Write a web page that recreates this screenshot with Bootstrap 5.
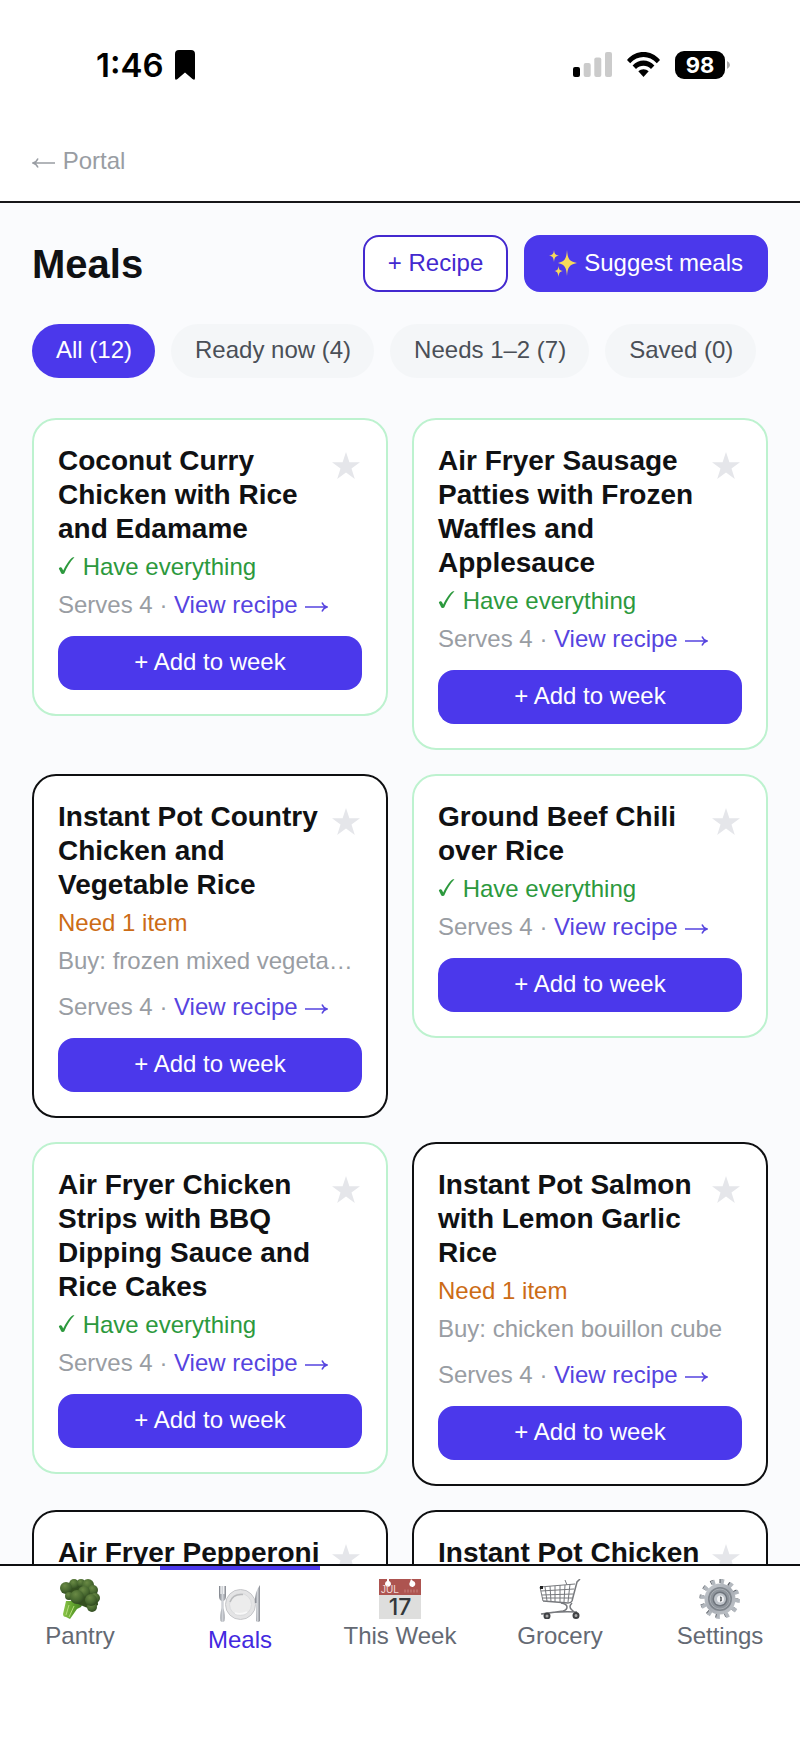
<!DOCTYPE html>
<html lang="en">
<head>
  <meta charset="utf-8" />
  <meta name="viewport" content="width=device-width, initial-scale=1" />
  <title>Meals</title>
  <link href="https://cdn.jsdelivr.net/npm/bootstrap@5.3.3/dist/css/bootstrap.min.css" rel="stylesheet" />
  <script src="https://cdn.jsdelivr.net/npm/bootstrap@5.3.3/dist/js/bootstrap.bundle.min.js"></script>
  <style>
    :root {
      --indigo: #4b38eb;
      --ink: #101113;
      --muted: #999da3;
    }
    body {
      font-family: "Liberation Sans", Arial, sans-serif;
      font-size: 24px;
      line-height: 32px;
      color: var(--ink);
      background: #fff;
    }
    a {
      text-decoration: none;
    }
    .status-bar {
      padding: 45px 70px 0 96px;
      height: 85px;
      font-family: Inter, sans-serif;
      color: #000;
    }
    .time-group {
      gap: 11px;
    }
    .clock {
      font-size: 33px;
      font-weight: 600;
    }
    .status-icons {
      gap: 15px;
    }
    .top-link {
      padding: 61px 32px 24px;
      border-bottom: 2px solid #17171a;
    }
    .top-link a {
      color: var(--muted);
    }
    main {
      background: #fafbfd;
      padding: 32px 32px 0;
      min-height: 0;
      scrollbar-width: none;
    }
    h1 {
      font-size: 40px;
      font-weight: 700;
    }
    .btn {
      font-size: 24px;
      line-height: 32px;
    }
    .btn-top {
      gap: 7px;
      padding: 10px 23px 11px;
      border: 2px solid #4b38eb;
      border-radius: 16px;
    }
    .btn-recipe {
      color: #4329cf;
      border-color: #4329cf;
      background: #fff;
    }
    .btn-indigo {
      color: #fff;
      background: var(--indigo);
    }
    .chips {
      margin: 32px 0 40px;
    }
    .chip {
      padding: 10px 23px 12px 24px;
      border: 0;
      color: #4a4f57;
      background: #f4f6f8;
    }
    .chip.active {
      color: #fff;
      background: var(--indigo);
    }
    .meal {
      padding: 24px;
      background: #fff;
      border: 2px solid #0e0f11;
      border-radius: 24px;
    }
    .meal-ready {
      border-color: #bdf2cf;
    }
    .meal h2 {
      font-size: 28px;
      line-height: 34px;
      font-weight: 700;
    }
    .fav {
      margin-top: 8px;
      color: #e5e6ea;
      line-height: 0;
    }
    .status-line {
      margin-top: 5px;
    }
    .have {
      color: #2c993d;
    }
    .need {
      color: #cc6c16;
    }
    .buy {
      margin-top: 6px;
      color: var(--muted);
    }
    .serves {
      margin-top: 6px;
      color: var(--muted);
    }
    .buy + .serves {
      margin-top: 14px;
    }
    .serves a {
      color: #5644df;
    }
    .btn-add {
      margin-top: 15px;
      padding: 10px 24px 12px;
      border: 0;
      border-radius: 16px;
    }
    .tab-bar {
      height: 175px;
      background: #fff;
      border-top: 2px solid #0e0f11;
    }
    .tab-bar a {
      flex: 1 1 0;
      padding-top: 13px;
      line-height: 28px;
      text-align: center;
      color: #646973;
    }
    .tab-bar a.active {
      color: #4329e0;
      border-top: 4px solid var(--indigo);
    }
    .tab-bar svg {
      display: block;
      margin: 0 auto 3px;
    }
  </style>
</head>
<body class="d-flex flex-column vh-100 overflow-hidden">

  <!-- Shared icons -->
  <svg class="d-none" xmlns="http://www.w3.org/2000/svg">
    <symbol id="star" viewBox="0 0 28 28">
      <path fill="currentColor" d="M14 0 L17.4 10.2 H28 L19.5 16.6 L22.8 27 L14 20.6 L5.2 27 L8.5 16.6 L0 10.2 H10.6 Z" />
    </symbol>
    <symbol id="check" viewBox="0 0 18 20">
      <path fill="currentColor" d="M0 13 C0 11.4 2.6 10.7 3.4 12.2 L4.8 15 C7.4 9.4 11.4 3.6 14.6 .8 C15.4 .2 16.2 .2 17.3 .2 C12.4 5.2 8.8 11.4 6.2 17.7 C5.5 19 3 19.2 2.5 18 C1.9 16.4 .8 14.8 0 13 Z" />
    </symbol>
    <symbol id="arrow" viewBox="0 0 24 12">
      <path fill="none" stroke="currentColor" stroke-width="1.5" d="M1 6 H22.5 M18 1.500 Q19.500 5 23 6 Q19.500 7 18 10.500" />
    </symbol>
    <symbol id="arrow-back" viewBox="0 0 24 12">
      <path fill="none" stroke="currentColor" stroke-width="1.5" d="M23 6 H1.5 M6 1.500 Q4.500 5 1 6 Q4.500 7 6 10.500" />
    </symbol>
  </svg>

  <!-- Status bar -->
  <div class="status-bar d-flex justify-content-between align-items-center">
    <div class="time-group d-flex align-items-center">
      <span class="clock">1:46</span>
      <svg width="20" height="30" viewBox="0 0 20 30"><path d="M4 0 H16 Q20 0 20 4 V28 Q20 31 17.5 29 L10 22.5 L2.5 29 Q0 31 0 28 V4 Q0 0 4 0 Z" /></svg>
    </div>
    <div class="status-icons d-flex align-items-center">
      <svg width="39" height="25" viewBox="0 0 39 25">
        <rect x="0" y="15" width="7" height="10" rx="2" />
        <g fill="#cbcbcb">
          <rect x="10.7" y="11" width="7" height="14" rx="2" />
          <rect x="21.3" y="5.5" width="7" height="19.5" rx="2" />
          <rect x="32" y="0" width="7" height="25" rx="2" />
        </g>
      </svg>
      <svg width="33" height="25" viewBox="0 0 33 25">
        <path d="M0 8 C9 -2.6 24 -2.6 33 8 L29.8 11.2 C22.4 3 10.6 3 3.2 11.2 Z" />
        <path d="M5.6 13.6 C11.8 6.9 21.2 6.9 27.4 13.6 L24 17 C19.8 12.6 13.2 12.6 9 17 Z" />
        <path d="M11.3 19.3 C14.2 16.6 18.8 16.6 21.7 19.3 L16.5 25 Z" />
      </svg>
      <svg width="55" height="28" viewBox="0 0 55 28">
        <rect width="50" height="28" rx="9" />
        <path fill="#a9a9a9" d="M52 10 Q55 11.5 55 14 Q55 16.5 52 18 Z" />
        <text x="25" y="22" text-anchor="middle" font-family="Inter, sans-serif" font-size="22" font-weight="700" fill="#fff">98</text>
      </svg>
    </div>
  </div>

  <div class="top-link">
    <a href="#"><svg class="align-baseline" width="24" height="12"><use href="#arrow-back" /></svg> Portal</a>
  </div>

  <main class="flex-grow-1 overflow-auto">
    <div class="d-flex align-items-center gap-3">
      <h1 class="mb-0 me-auto">Meals</h1>
      <button type="button" class="btn btn-top btn-recipe">+ Recipe</button>
      <button type="button" class="btn btn-top btn-indigo d-flex align-items-center">
        <svg width="28" height="28" viewBox="0 0 28 28" fill="#f6d95b">
          <path d="M18 1 C18.7 9.5 20 12.5 28 14 C20 15.5 18.7 18.5 18 27 C17.3 18.5 16 15.5 9 14 C16 12.5 17.3 9.5 18 1 Z" />
          <path d="M5 1 C5.5 5 6.2 6 10 6.5 C6.2 7.2 5.5 8.5 5 13 C4.5 8.5 3.8 7.2 0 6.5 C3.8 6 4.5 5 5 1 Z" />
          <path d="M9.5 17 C10 20.5 10.6 21.5 14 22 C10.6 22.6 10 24 9.5 28 C9 24 8.4 22.6 5.5 22 C8.4 21.5 9 20.5 9.5 17 Z" />
        </svg>
        Suggest meals
      </button>
    </div>

    <!-- Filters -->
    <div class="chips d-flex gap-3">
      <button type="button" class="btn rounded-pill chip active">All (12)</button>
      <button type="button" class="btn rounded-pill chip">Ready now (4)</button>
      <button type="button" class="btn rounded-pill chip">Needs 1–2 (7)</button>
      <button type="button" class="btn rounded-pill chip">Saved (0)</button>
    </div>

    <!-- Meal cards -->
    <div class="row row-cols-2 g-4 align-items-start">
      <div class="col">
        <div class="meal meal-ready">
          <div class="d-flex align-items-start gap-2">
            <h2 class="mb-0 flex-grow-1">Coconut Curry Chicken with Rice and Edamame</h2>
            <button type="button" class="btn fav p-0 border-0" aria-label="Save meal"><svg width="32" height="28"><use href="#star" /></svg></button>
          </div>
          <div class="status-line have"><svg class="align-baseline" width="18" height="18"><use href="#check" /></svg> Have everything</div>
          <div class="serves">Serves 4 · <a href="#">View recipe <svg class="align-baseline" width="24" height="12"><use href="#arrow" /></svg></a></div>
          <button type="button" class="btn btn-indigo btn-add w-100 d-block">+ Add to week</button>
        </div>
      </div>

      <div class="col">
        <div class="meal meal-ready">
          <div class="d-flex align-items-start gap-2">
            <h2 class="mb-0 flex-grow-1">Air Fryer Sausage Patties with Frozen Waffles and Applesauce</h2>
            <button type="button" class="btn fav p-0 border-0" aria-label="Save meal"><svg width="32" height="28"><use href="#star" /></svg></button>
          </div>
          <div class="status-line have"><svg class="align-baseline" width="18" height="18"><use href="#check" /></svg> Have everything</div>
          <div class="serves">Serves 4 · <a href="#">View recipe <svg class="align-baseline" width="24" height="12"><use href="#arrow" /></svg></a></div>
          <button type="button" class="btn btn-indigo btn-add w-100 d-block">+ Add to week</button>
        </div>
      </div>

      <div class="col">
        <div class="meal">
          <div class="d-flex align-items-start gap-2">
            <h2 class="mb-0 flex-grow-1">Instant Pot Country Chicken and Vegetable Rice</h2>
            <button type="button" class="btn fav p-0 border-0" aria-label="Save meal"><svg width="32" height="28"><use href="#star" /></svg></button>
          </div>
          <div class="status-line need">Need 1 item</div>
          <div class="buy text-truncate">Buy: frozen mixed vegetables</div>
          <div class="serves">Serves 4 · <a href="#">View recipe <svg class="align-baseline" width="24" height="12"><use href="#arrow" /></svg></a></div>
          <button type="button" class="btn btn-indigo btn-add w-100 d-block">+ Add to week</button>
        </div>
      </div>

      <div class="col">
        <div class="meal meal-ready">
          <div class="d-flex align-items-start gap-2">
            <h2 class="mb-0 flex-grow-1">Ground Beef Chili over Rice</h2>
            <button type="button" class="btn fav p-0 border-0" aria-label="Save meal"><svg width="32" height="28"><use href="#star" /></svg></button>
          </div>
          <div class="status-line have"><svg class="align-baseline" width="18" height="18"><use href="#check" /></svg> Have everything</div>
          <div class="serves">Serves 4 · <a href="#">View recipe <svg class="align-baseline" width="24" height="12"><use href="#arrow" /></svg></a></div>
          <button type="button" class="btn btn-indigo btn-add w-100 d-block">+ Add to week</button>
        </div>
      </div>

      <div class="col">
        <div class="meal meal-ready">
          <div class="d-flex align-items-start gap-2">
            <h2 class="mb-0 flex-grow-1">Air Fryer Chicken Strips with BBQ Dipping Sauce and Rice Cakes</h2>
            <button type="button" class="btn fav p-0 border-0" aria-label="Save meal"><svg width="32" height="28"><use href="#star" /></svg></button>
          </div>
          <div class="status-line have"><svg class="align-baseline" width="18" height="18"><use href="#check" /></svg> Have everything</div>
          <div class="serves">Serves 4 · <a href="#">View recipe <svg class="align-baseline" width="24" height="12"><use href="#arrow" /></svg></a></div>
          <button type="button" class="btn btn-indigo btn-add w-100 d-block">+ Add to week</button>
        </div>
      </div>

      <div class="col">
        <div class="meal">
          <div class="d-flex align-items-start gap-2">
            <h2 class="mb-0 flex-grow-1">Instant Pot Salmon with Lemon Garlic Rice</h2>
            <button type="button" class="btn fav p-0 border-0" aria-label="Save meal"><svg width="32" height="28"><use href="#star" /></svg></button>
          </div>
          <div class="status-line need">Need 1 item</div>
          <div class="buy text-truncate">Buy: chicken bouillon cube</div>
          <div class="serves">Serves 4 · <a href="#">View recipe <svg class="align-baseline" width="24" height="12"><use href="#arrow" /></svg></a></div>
          <button type="button" class="btn btn-indigo btn-add w-100 d-block">+ Add to week</button>
        </div>
      </div>

      <div class="col">
        <div class="meal">
          <div class="d-flex align-items-start gap-2">
            <h2 class="mb-0 flex-grow-1">Air Fryer Pepperoni</h2>
            <button type="button" class="btn fav p-0 border-0" aria-label="Save meal"><svg width="32" height="28"><use href="#star" /></svg></button>
          </div>
        </div>
      </div>

      <div class="col">
        <div class="meal">
          <div class="d-flex align-items-start gap-2">
            <h2 class="mb-0 flex-grow-1">Instant Pot Chicken</h2>
            <button type="button" class="btn fav p-0 border-0" aria-label="Save meal"><svg width="32" height="28"><use href="#star" /></svg></button>
          </div>
        </div>
      </div>
    </div>
  </main>

  <!-- Bottom tabs -->
  <nav class="tab-bar d-flex flex-shrink-0">
    <a href="#">
      <svg width="40" height="40" viewBox="0 0 40 40">
        <defs>
          <radialGradient id="leaf" cx=".4" cy=".3" r=".75"><stop offset="0" stop-color="#6a8a45" /><stop offset=".6" stop-color="#47682f" /><stop offset="1" stop-color="#2d461e" /></radialGradient>
          <linearGradient id="stem"><stop offset="0" stop-color="#8cc54a" /><stop offset=".5" stop-color="#5fa02c" /><stop offset="1" stop-color="#3f7a22" /></linearGradient>
        </defs>
        <path fill="url(#stem)" d="M6 22 L3 35 Q3 38 6 38 L10 40 L17 30 L21 28 L24 22 Z" />
        <path stroke="#b5dc7c" fill="none" d="M9 26 L6 36 M14 27 L9 38" />
        <path fill="#34501f" d="M5 6 L14 2 L30 3 L37 12 L38 26 L30 30 L18 25 L6 14 Z" />
        <g fill="url(#leaf)">
          <circle cx="14" cy="5" r="5" />
          <circle cx="21" cy="4" r="4" />
          <circle cx="28" cy="6" r="6" />
          <circle cx="33" cy="11" r="5" />
          <circle cx="6" cy="9" r="6" />
          <circle cx="24" cy="13" r="6" />
          <circle cx="35" cy="19" r="5" />
          <circle cx="9" cy="17" r="4" />
          <circle cx="32" cy="28" r="5" />
          <circle cx="31" cy="21" r="6" />
          <circle cx="17" cy="18" r="7" />
        </g>
      </svg>
      Pantry
    </a>
    <a href="#" class="active" aria-current="page">
      <svg width="44" height="40" viewBox="0 0 44 40">
        <defs>
          <linearGradient id="steel"><stop offset="0" stop-color="#7c8088" /><stop offset=".5" stop-color="#d0d3d8" /><stop offset="1" stop-color="#85888f" /></linearGradient>
        </defs>
        <circle cx="22.5" cy="21.5" r="15" fill="#e4e4e5" stroke="#c6c7ca" />
        <circle cx="22.5" cy="21.5" r="11" fill="#ececec" stroke="#dadbdd" />
        <path d="M12 19 Q15 10.5 25 11.5" fill="none" stroke="#babbbd" stroke-width="1.5" />
        <path d="M17 30 Q23 32 29 29" fill="none" stroke="#f8f8f8" stroke-width="1.5" />
        <path fill="url(#steel)" d="M1 3 H2.5 V11 H3.6 V3 H5.2 V11 H6.3 V3 H8 V13 Q8 17 5.5 18 V25 Q7.5 33 6.500 38 Q4.5 40 2.5 38 Q1.7 33 3.5 25 V18 Q1 17 1 13 Z" />
        <path fill="url(#steel)" d="M42 2 V38 Q40 40 38 38 L38.5 20 H37 Q36.5 9 42 2 Z" />
      </svg>
      Meals
    </a>
    <a href="#">
      <svg width="42" height="40" viewBox="0 0 42 40">
        <rect width="42" height="40" fill="#dededd" />
        <rect width="42" height="16" fill="#ad5450" />
        <path fill="#fff" d="M8 0 H10 V2 A3 3 0 1 1 8 2 Z M32 0 L34 2 A3 3 0 1 1 31 3 Z" />
        <text x="2" y="14" font-family="Liberation Sans, sans-serif" font-size="10" fill="#f1d9d7">JUL</text>
        <path d="M25 12 H39" stroke="#bb6c68" stroke-dasharray="2 1" stroke-width="3" />
        <text x="21" y="36" text-anchor="middle" font-family="Inter, sans-serif" font-size="23" font-weight="500" fill="#33373b">17</text>
      </svg>
      This Week
    </a>
    <a href="#">
      <svg width="42" height="40" viewBox="0 0 42 40" fill="none" stroke="#77797d">
        <path d="M41 0 L38 3 L33 22 Q32 24 29 24 L4 22" stroke-width="1.5" />
        <path d="M1 8 L36 5 M1 8 L4 22 M2 12 L35 10 M3 16 L34 15 M3 19 L33 19 M6 8 L8 22 M11 7 L12 23 M16 7 V23 M21 6 V23 M26 6 L25 23 M31 5 L29 23 M26 1 L28 6" />
        <path d="M22 24 Q28 25 28 28 Q28 31 24 32 L3 35 M33 24 Q29 28 33 31 L36 34 M2 35 Q18 32 38 33" stroke-width="1.5" />
        <rect x="1" y="7" width="3" height="3" fill="#222" stroke="none" />
        <circle cx="8" cy="37" r="2.5" fill="#aaa" stroke="#3f4144" stroke-width="2" />
        <circle cx="37" cy="36.5" r="2.5" fill="#aaa" stroke="#3f4144" stroke-width="2" />
      </svg>
      Grocery
    </a>
    <a href="#">
      <svg width="42" height="40" viewBox="0 0 42 40">
        <defs>
          <linearGradient id="gear" x2="1" y2="1"><stop offset="0" stop-color="#c9cdd2" /><stop offset=".5" stop-color="#a6abb2" /><stop offset="1" stop-color="#c3c7cc" /></linearGradient>
        </defs>
        <circle cx="20" cy="19.5" r="17.5" fill="none" stroke="#555a61" stroke-width="4" stroke-dasharray="3.4 5.76" />
        <circle cx="21" cy="20" r="17.5" fill="none" stroke="#b3b8be" stroke-width="5" stroke-dasharray="3.6 5.56" />
        <circle cx="21" cy="20" r="15.5" fill="url(#gear)" />
        <circle cx="21" cy="20" r="12" fill="#7f858c" />
        <circle cx="21" cy="20" r="10" fill="#8f959c" stroke="#a9aeb4" />
        <circle cx="21" cy="20" r="7.5" fill="#6e747c" />
        <circle cx="21" cy="20" r="6" fill="#bfc4ca" />
        <circle cx="21.5" cy="20" r="3.5" fill="#f1f2f4" />
        <path d="M21 17.5 Q23.5 17.5 22.5 20 Q23.5 22.5 21 22.5 Q22 20 21 17.5 Z" fill="#3d4147" />
      </svg>
      Settings
    </a>
  </nav>
</body>
</html>
